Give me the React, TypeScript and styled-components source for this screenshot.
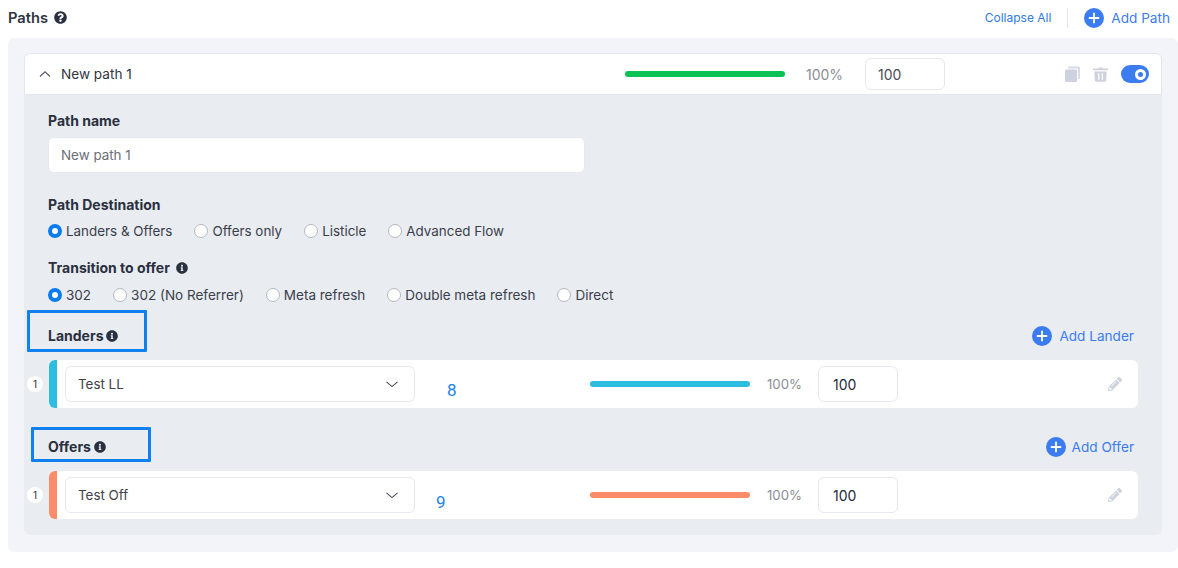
import React from 'react'
import styled, { createGlobalStyle } from 'styled-components'
import { FaInfoCircle, FaPencilAlt, FaQuestionCircle } from 'react-icons/fa'

const GlobalStyle = createGlobalStyle`
  html, body {
    margin: 0;
    padding: 0;
    background: #fff;
    font-family: Inter, "Liberation Sans", sans-serif;
    font-size: 14px;
    color: #2a3040;
  }
`

const Page = styled.div`
  width: 1178px;
  height: 568px;
  position: relative;
  overflow: hidden;
`

const TopBar = styled.div`
  height: 38px;
  display: flex;
  align-items: center;
  padding: 0 8px 3px 8px;
  box-sizing: border-box;
`

const PageTitle = styled.div`
  font-size: 14.7px;
  font-weight: 600;
  color: #2f3542;
  display: flex;
  align-items: center;
  gap: 6px;
`

const TopActions = styled.div`
  margin-left: auto;
  display: flex;
  align-items: center;
`

const CollapseLink = styled.span`
  font-size: 12px;
  color: #2f7ae5;
  padding-right: 16px;
  border-right: 1px solid #e3e6ec;
  line-height: 20px;
`

const AddLink = styled.span<{ $gap?: number }>`
  display: flex;
  align-items: center;
  gap: ${({ $gap }) => $gap ?? 7}px;
  font-size: 13.6px;
  color: #3b7cf0;
`

const AddPath = styled(AddLink)`
  margin-left: 16px;
`

const Panel = styled.div`
  width: 1170px;
  height: 514px;
  margin-left: 8px;
  padding: 15px 16px 17px;
  box-sizing: border-box;
  background: #f3f4f9;
  border-radius: 6px;
`

const Card = styled.div`
  height: 100%;
  border-radius: 6px;
  background: #e9ecf1;
  overflow: hidden;
`

const CardHeader = styled.div`
  height: 42px;
  box-sizing: border-box;
  background: #fff;
  border: 1px solid #e3e6ec;
  border-radius: 6px 6px 0 0;
  display: flex;
  align-items: center;
  padding: 0 12px 0 13px;
`

const NameCell = styled.div`
  width: 587px;
  padding-bottom: 1px;
  display: flex;
  align-items: center;
  gap: 9px;
  font-size: 13.6px;
  color: #2f3542;
`

const HeaderIcons = styled.div`
  margin-left: auto;
  display: flex;
  align-items: center;
  gap: 13px;
`

const Toggle = styled.div`
  width: 28px;
  height: 18px;
  border-radius: 9px;
  background: #3b7cf0;
  position: relative;
  &::after {
    content: '';
    position: absolute;
    right: 3px;
    top: 3.5px;
    width: 11px;
    height: 11px;
    box-sizing: border-box;
    border-radius: 50%;
    background: #3b7cf0;
    border: 3.5px solid #fff;
  }
`

const Weight = styled.div`
  display: flex;
  align-items: center;
`

const Bar = styled.div<{ $color: string; $h: number }>`
  width: 160px;
  height: ${({ $h }) => $h}px;
  border-radius: 4px;
  background: ${({ $color }) => $color};
`

const Percent = styled.span`
  font-size: 14px;
  color: #8a8d94;
  width: 59px;
  padding-left: 21px;
  box-sizing: content-box;
`

const PercentSmall = styled(Percent)`
  font-size: 13.2px;
  width: 51px;
  padding-left: 17px;
`

const NumberBox = styled.div<{ $h: number; $dark?: boolean }>`
  width: 80px;
  height: ${({ $h }) => $h}px;
  box-sizing: border-box;
  border: 1px solid #e6e8ed;
  border-radius: 6px;
  background: #fff;
  display: flex;
  align-items: center;
  padding-left: ${({ $dark }) => ($dark ? 14 : 12)}px;
  font-size: 14px;
  color: ${({ $dark }) => ($dark ? '#23283a' : '#4a4d55')};
`

const Body = styled.div`
  padding: 17px 24px 0;
`

const Label = styled.div`
  font-size: 14px;
  font-weight: 700;
  line-height: 18px;
  color: #2a3040;
  display: flex;
  align-items: center;
  gap: 6px;
`

const TextBox = styled.div`
  width: 537px;
  height: 36px;
  box-sizing: border-box;
  margin-top: 7px;
  border: 1px solid #e6e8ed;
  border-radius: 6px;
  background: #fff;
  display: flex;
  align-items: center;
  padding-left: 12px;
  font-size: 13.4px;
  color: #6c6f76;
`

const Field = styled.div<{ $top: number }>`
  margin-top: ${({ $top }) => $top}px;
`

const RadioRow = styled.div<{ $top: number; $size: number }>`
  display: flex;
  align-items: center;
  gap: 22px;
  margin-top: ${({ $top }) => $top}px;
  height: 18px;
  font-size: ${({ $size }) => $size}px;
`

const Radio = styled.label`
  display: flex;
  align-items: center;
  gap: 4px;
  color: #3a3f4b;
`

const RadioDot = styled.span<{ $on?: boolean }>`
  width: 14px;
  height: 14px;
  box-sizing: border-box;
  border-radius: 50%;
  background: #fff;
  border: ${({ $on }) => ($on ? '4px solid #0a7cf2' : '1px solid #b4b7bd')};
`

const SectionHead = styled.div<{ $top: number }>`
  margin-top: ${({ $top }) => $top}px;
  height: 24px;
  display: flex;
  align-items: center;
  justify-content: space-between;
  padding-right: 4px;
`

const SectionLabel = styled(Label)`
  gap: 3px;
`

const ItemRow = styled.div<{ $top: number }>`
  margin: ${({ $top }) => $top}px 0 0 1px;
  height: 48px;
  position: relative;
  display: flex;
  align-items: center;
  background: #fff;
  border-radius: 6px;
`

const Stripe = styled.div<{ $color: string }>`
  width: 8px;
  align-self: stretch;
  border-radius: 6px 0 0 6px;
  background: ${({ $color }) => $color};
`

const OrderBadge = styled.span`
  position: absolute;
  left: -22px;
  top: 16px;
  width: 16px;
  height: 16px;
  border-radius: 50%;
  background: #fff;
  display: flex;
  align-items: center;
  justify-content: center;
  font-size: 10px;
  color: #2a3040;
`

const SelectBox = styled.div`
  width: 350px;
  height: 36px;
  box-sizing: border-box;
  margin: 0 175px 0 8px;
  border: 1px solid #e6e8ed;
  border-radius: 6px;
  display: flex;
  align-items: center;
  justify-content: space-between;
  padding: 0 15px 0 12px;
  font-size: 13.4px;
  color: #3f424a;
`

const EditIcon = styled.span`
  margin-left: auto;
  padding-right: 16px;
  display: flex;
  color: #ced2dc;
`

const CalloutBox = styled.div<{ $l: number; $t: number; $w: number; $h: number }>`
  position: absolute;
  left: ${({ $l }) => $l}px;
  top: ${({ $t }) => $t}px;
  width: ${({ $w }) => $w}px;
  height: ${({ $h }) => $h}px;
  box-sizing: border-box;
  border: 3px solid #0f80f0;
  border-radius: 1px;
  pointer-events: none;
`

const CalloutNumber = styled.span<{ $l: number; $t: number }>`
  position: absolute;
  left: ${({ $l }) => $l}px;
  top: ${({ $t }) => $t}px;
  font-family: Roboto, sans-serif;
  font-size: 17px;
  line-height: 20px;
  color: #1c84e4;
`

function PlusIcon({ size }: { size: number }) {
  return (
    <svg width={size} height={size} viewBox="0 0 20 20">
      <circle cx="10" cy="10" r="10" fill="#3b7cf0" />
      <path d="M10 4.8v10.4M4.8 10h10.4" stroke="#fff" strokeWidth="1.8" />
    </svg>
  )
}

function Chevron({ up, size, color }: { up?: boolean; size: number; color: string }) {
  return (
    <svg width={size} height={size} viewBox="0 0 14 14" fill="none">
      <path
        d={up ? 'M2 9.500 7 4.800l5 4.700' : 'M1.500 4.800 7 9.600l5.500-4.800'}
        stroke={color}
        strokeWidth="1.1"
      />
    </svg>
  )
}

function CopyIcon() {
  return (
    <svg width="15" height="16" viewBox="0 0 15 16">
      <path d="M3 1.500A1 1 0 0 1 4 .5h10a1 1 0 0 1 1 1V12a1 1 0 0 1-1 1h-1V3.500a1 1 0 0 0-1-1H3z" fill="#d8dbe5" />
      <rect x="0" y="3.500" width="12" height="12.500" rx="1" fill="#ced2e0" />
    </svg>
  )
}

function TrashIcon() {
  return (
    <svg width="15" height="15" viewBox="0 0 15 15">
      <path d="M5.200 1.400 6 .4h3l.8 1H15v1.800H0V1.400z" fill="#ced2dc" />
      <path
        d="M1.300 4.400h12.400l-.6 9.300a1.200 1.200 0 0 1-1.200 1.100H3.100a1.200 1.200 0 0 1-1.200-1.100zM5 6.200v6.600h1.300V6.200zm3.700 0v6.600H10V6.200z"
        fill="#ced2dc"
        fillRule="evenodd"
      />
    </svg>
  )
}

type ItemProps = {
  top: number
  color: string
  name: string
}

function Item({ top, color, name }: ItemProps) {
  return (
    <ItemRow $top={top}>
      <OrderBadge>1</OrderBadge>
      <Stripe $color={color} />
      <SelectBox>
        {name}
        <Chevron size={14} color="#4a4d55" />
      </SelectBox>
      <Weight>
        <Bar $color={color} $h={6} />
        <PercentSmall>100%</PercentSmall>
        <NumberBox $h={36} $dark>100</NumberBox>
      </Weight>
      <EditIcon>
        <FaPencilAlt size={14} />
      </EditIcon>
    </ItemRow>
  )
}

const destinations = ['Offers only', 'Listicle', 'Advanced Flow']
const transitions = ['302 (No Referrer)', 'Meta refresh', 'Double meta refresh', 'Direct']

export default function App() {
  return (
    <Page>
      <GlobalStyle />
      <TopBar>
        <PageTitle>
          Paths <FaQuestionCircle size={13} color="#2a3040" />
        </PageTitle>
        <TopActions>
          <CollapseLink>Collapse All</CollapseLink>
          <AddPath>
            <PlusIcon size={20} />
            Add Path
          </AddPath>
        </TopActions>
      </TopBar>
      <Panel>
        <Card>
          <CardHeader>
            <NameCell>
              <Chevron up size={14} color="#555a66" />
              New path 1
            </NameCell>
            <Weight>
              <Bar $color="#0cc254" $h={6} />
              <Percent>100%</Percent>
              <NumberBox $h={32}>100</NumberBox>
            </Weight>
            <HeaderIcons>
              <CopyIcon />
              <TrashIcon />
              <Toggle />
            </HeaderIcons>
          </CardHeader>
          <Body>
            <Label>Path name</Label>
            <TextBox>New path 1</TextBox>
            <Field $top={23}>
              <Label>Path Destination</Label>
              <RadioRow $top={8} $size={13.4}>
                <Radio>
                  <RadioDot $on />
                  Landers &amp; Offers
                </Radio>
                {destinations.map((d) => (
                  <Radio key={d}>
                    <RadioDot />
                    {d}
                  </Radio>
                ))}
              </RadioRow>
            </Field>
            <Field $top={19}>
              <Label>
                Transition to offer <FaInfoCircle size={12} color="#2a3040" />
              </Label>
              <RadioRow $top={9} $size={13.5}>
                <Radio>
                  <RadioDot $on />
                  302
                </Radio>
                {transitions.map((t) => (
                  <Radio key={t}>
                    <RadioDot />
                    {t}
                  </Radio>
                ))}
              </RadioRow>
            </Field>
            <SectionHead $top={20}>
              <SectionLabel>
                Landers <FaInfoCircle size={12} color="#2a3040" />
              </SectionLabel>
              <AddLink>
                <PlusIcon size={20} />
                Add Lander
              </AddLink>
            </SectionHead>
            <Item top={12} color="#2dbde0" name="Test LL" />
            <SectionHead $top={27}>
              <SectionLabel>
                Offers <FaInfoCircle size={12} color="#2a3040" />
              </SectionLabel>
              <AddLink $gap={6}>
                <PlusIcon size={20} />
                Add Offer
              </AddLink>
            </SectionHead>
            <Item top={12} color="#fb8c69" name="Test Off" />
          </Body>
        </Card>
      </Panel>
      <CalloutBox $l={27} $t={310} $w={120} $h={42} />
      <CalloutBox $l={31} $t={427} $w={120} $h={35} />
      <CalloutNumber $l={447} $t={380}>8</CalloutNumber>
      <CalloutNumber $l={436} $t={492}>9</CalloutNumber>
    </Page>
  )
}
